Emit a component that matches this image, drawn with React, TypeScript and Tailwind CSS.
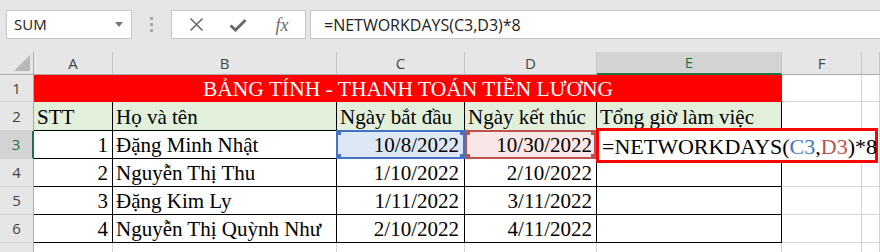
import React from 'react';

const UI_FONT = { fontFamily: '"Open Sans", "Noto Sans", sans-serif' };
const CELL_FONT = { fontFamily: '"Liberation Serif", "Times New Roman", serif' };

const COLS = ['A', 'B', 'C', 'D', 'E', 'F', ''];

const people = [
  { stt: '1', name: 'Đặng Minh Nhật', start: '10/8/2022', end: '10/30/2022' },
  { stt: '2', name: 'Nguyễn Thị Thu', start: '1/10/2022', end: '2/10/2022' },
  { stt: '3', name: 'Đặng Kim Ly', start: '1/11/2022', end: '3/11/2022' },
  { stt: '4', name: 'Nguyễn Thị Quỳnh Như', start: '2/10/2022', end: '4/11/2022' },
];

function Corners({ color }: { color: string }) {
  const base = `absolute w-[5px] h-[5px] ${color}`;
  return (
    <>
      <span className={`${base} -left-[2px] -top-[2px]`} />
      <span className={`${base} -right-[2px] -top-[2px]`} />
      <span className={`${base} -left-[2px] -bottom-[2px]`} />
      <span className={`${base} -right-[2px] -bottom-[2px]`} />
    </>
  );
}

function RowHeader({ n, active }: { n: number; active?: boolean }) {
  return (
    <div
      className={`flex items-center justify-center border-b border-[#d0d0d0] text-[15px] ${
        active
          ? 'bg-[#d3d3d3] text-[#217346] border-r-2 border-r-[#217346]'
          : 'bg-[#e6e6e6] text-[#444] border-r border-r-[#ababab]'
      }`}
      style={UI_FONT}
    >
      {n}
    </div>
  );
}

function Grid() {
  return <div className="border-r border-b border-[#d4d4d4]" />;
}

export default function App() {
  return (
    <div className="relative w-[880px] h-[252px] overflow-hidden bg-white">
      {/* formula bar */}
      <div className="h-[52px] bg-[#e6e6e6] flex items-start pt-[10px]" style={UI_FONT}>
        <div className="ml-[6px] w-[126px] h-[29px] bg-white border border-[#c6c6c6] flex items-center pl-[7px] pr-[8px]">
          <span className="text-[15px] text-[#222] flex-1">SUM</span>
          <svg width="8" height="5" viewBox="0 0 8 5">
            <path d="M0 0h8L4 5z" fill="#777" />
          </svg>
        </div>
        <div className="w-[39px] h-[29px] flex flex-col items-center justify-center gap-[3px]">
          <span className="w-[3px] h-[3px] bg-[#a8a8a8]" />
          <span className="w-[3px] h-[3px] bg-[#a8a8a8]" />
          <span className="w-[3px] h-[3px] bg-[#a8a8a8]" />
        </div>
        <div className="w-[135px] h-[29px] bg-white border border-[#c6c6c6] flex items-center">
          <div className="w-[44px] flex justify-center pl-[4px]">
            <svg width="15" height="15" viewBox="0 0 15 15">
              <path d="M1.5 1.5l12 12M13.5 1.5l-12 12" stroke="#6a6a6a" strokeWidth="1.6" />
            </svg>
          </div>
          <div className="w-[44px] flex justify-center">
            <svg width="18" height="14" viewBox="0 0 18 14">
              <path d="M1.5 7.5l5 4.5L16.5 2" stroke="#6a6a6a" strokeWidth="3" fill="none" />
            </svg>
          </div>
          <div className="w-[44px] flex justify-center">
            <span className="italic text-[18px] text-[#6a6a6a] leading-none" style={CELL_FONT}>
              fx
            </span>
          </div>
        </div>
        <div className="ml-[4px] flex-1 h-[29px] bg-white border border-[#c6c6c6] border-r-0 flex items-center pl-[13px]">
          <span className="text-[16px] text-[#222]">=NETWORKDAYS(C3,D3)*8</span>
        </div>
      </div>

      {/* sheet */}
      <div
        className="grid grid-cols-[34px_79px_224px_128px_132px_185px_80px_1fr] grid-rows-[23px_27px_29px_28px_28px_28px_28px_28px]"
        style={CELL_FONT}
      >
        {/* column headers */}
        <div className="bg-[#e6e6e6] border-r border-b border-[#ababab] relative">
          <svg className="absolute right-[3px] bottom-[3px]" width="16" height="16" viewBox="0 0 16 16">
            <path d="M16 0V16H0z" fill="#b8b8b8" />
          </svg>
        </div>
        {COLS.map((c) => (
          <div
            key={c || 'g'}
            className={`flex items-center justify-center text-[15px] ${
              c === 'E'
                ? 'bg-[#d3d3d3] text-[#217346] border-b-2 border-b-[#217346] border-r border-r-[#c6c6c6]'
                : 'bg-[#e6e6e6] text-[#444] border-b border-b-[#ababab] border-r border-r-[#c6c6c6]'
            }`}
            style={UI_FONT}
          >
            {c}
          </div>
        ))}

        {/* row 1 */}
        <RowHeader n={1} />
        <div className="col-span-5 bg-[#ff0000] text-white text-[21.5px] flex items-end justify-center leading-[25px]">
          BẢNG TÍNH - THANH TOÁN TIỀN LƯƠNG
        </div>
        <Grid />
        <Grid />

        {/* row 2 */}
        <RowHeader n={2} />
        {['STT', 'Họ và tên', 'Ngày bắt đầu', 'Ngày kết thúc', 'Tổng giờ làm việc'].map((h) => (
          <div
            key={h}
            className="bg-[#e2efda] border-r border-b border-black text-[21px] text-black flex items-end pl-[3px] leading-[26px] whitespace-nowrap overflow-hidden"
          >
            {h}
          </div>
        ))}
        <Grid />
        <Grid />

        {/* rows 3-6 */}
        {people.map((p, i) => {
          const first = i === 0;
          return (
            <React.Fragment key={p.stt}>
              <RowHeader n={i + 3} active={first} />
              <div className="border-r border-b border-black text-[21px] flex items-end justify-end pr-[4px] leading-[26px]">
                {p.stt}
              </div>
              <div className="border-r border-b border-black text-[21px] flex items-end pl-[3px] leading-[26px] whitespace-nowrap">
                {p.name}
              </div>
              <div
                className={`relative border-r border-b border-black text-[21px] flex items-end justify-end pr-[5px] leading-[26px] ${
                  first ? 'bg-[#dde7f5]' : ''
                }`}
              >
                {first && (
                  <div className="absolute -left-[1px] -top-[1px] -right-[1px] bottom-[-1px] border-2 border-[#4472c4]">
                    <Corners color="bg-[#4472c4]" />
                  </div>
                )}
                <span className="relative">{p.start}</span>
              </div>
              <div
                className={`relative border-r border-b border-black text-[21px] flex items-end justify-end pr-[4px] leading-[26px] ${
                  first ? 'bg-[#f9e6e6]' : ''
                }`}
              >
                {first && (
                  <div className="absolute left-0 -top-[1px] right-0 bottom-[-1px] border-2 border-[#c0504d]">
                    <Corners color="bg-[#c0504d]" />
                  </div>
                )}
                <span className="relative">{p.end}</span>
              </div>
              <div className="border-r border-b border-black" />
              <Grid />
              <Grid />
            </React.Fragment>
          );
        })}

        {/* row 7 */}
        <RowHeader n={7} />
        <Grid />
        <Grid />
        <Grid />
        <Grid />
        <Grid />
        <Grid />
        <Grid />
      </div>

      {/* in-cell edit box for E3 */}
      <div
        className="absolute left-[596px] top-[128px] w-[282px] h-[35px] border-[3px] border-[#ff0000] bg-white flex items-end pl-[3px] text-[22px] leading-[27px] whitespace-nowrap"
        style={CELL_FONT}
      >
        <span>=NETWORKDAYS(</span>
        <span className="text-[#4472c4]">C3</span>
        <span>,</span>
        <span className="text-[#c0504d]">D3</span>
        <span>)*8</span>
      </div>
    </div>
  );
}
